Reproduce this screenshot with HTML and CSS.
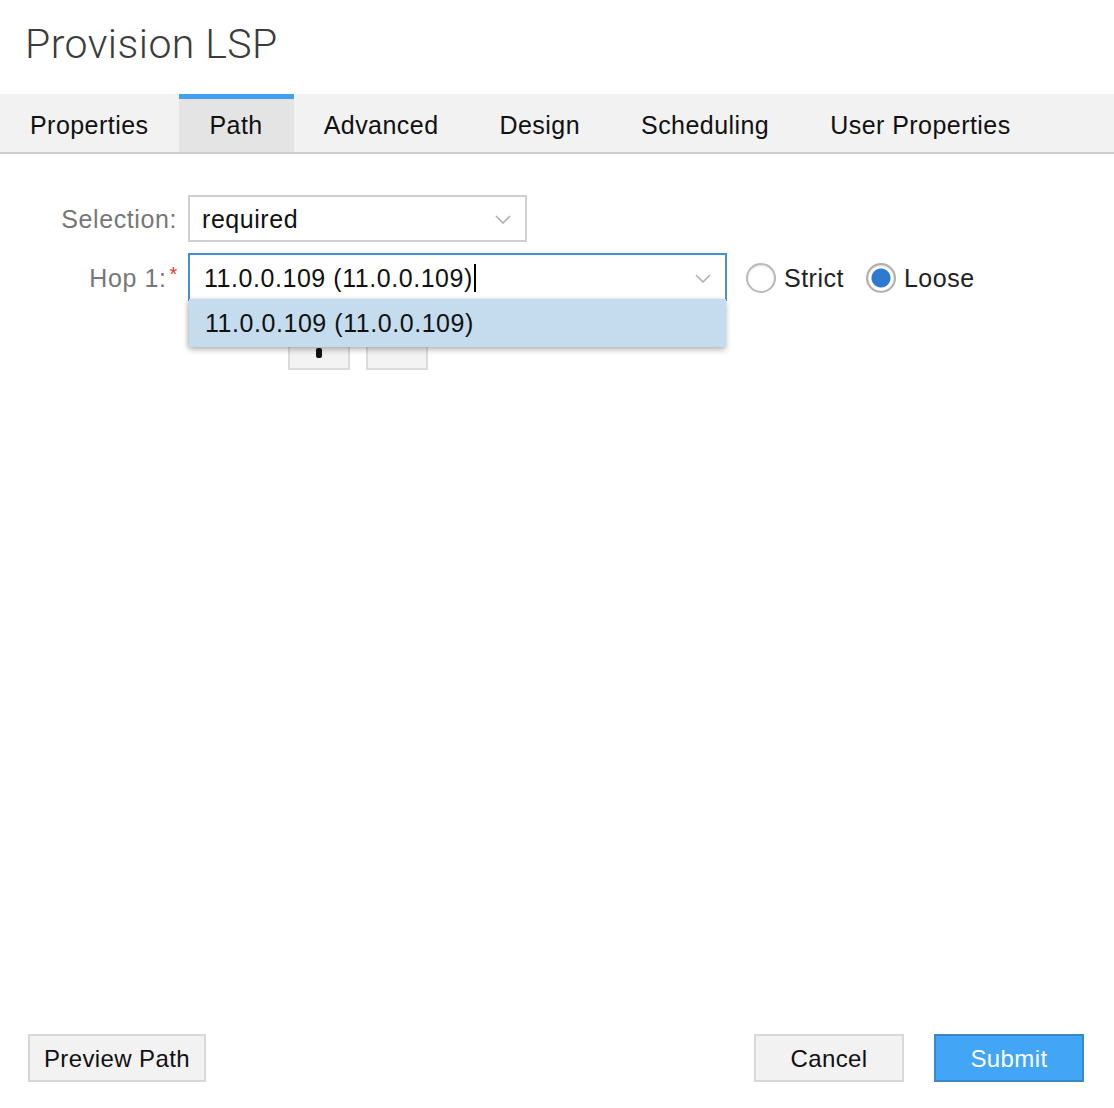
FILE: index.html
```html
<!DOCTYPE html>
<html>
<head>
<meta charset="utf-8">
<link rel="stylesheet" href="styles.css">
</head>
<body>
<div class="page">
  <h1 class="title">Provision LSP</h1>
  <nav class="tabs">
    <div class="tab">Properties</div>
    <div class="tab active">Path</div>
    <div class="tab">Advanced</div>
    <div class="tab">Design</div>
    <div class="tab">Scheduling</div>
    <div class="tab">User Properties</div>
  </nav>
  <main class="form">
    <div class="row">
      <label class="label">Selection:</label>
      <div class="select sel-small">
        <span class="value">required</span>
        <svg class="chev" width="16" height="9" viewBox="0 0 16 9"><polyline points="1,1 8,8 15,1" fill="none" stroke="#b0b0b0" stroke-width="1.6"/></svg>
      </div>
    </div>
    <div class="row">
      <label class="label">Hop 1:<span class="req">*</span></label>
      <div class="select sel-wide focused">
        <span class="value">11.0.0.109 (11.0.0.109)<span class="caret"></span></span>
        <svg class="chev" width="16" height="9" viewBox="0 0 16 9"><polyline points="1,1 8,8 15,1" fill="none" stroke="#b0b0b0" stroke-width="1.6"/></svg>
        <div class="dropdown"><div class="option">11.0.0.109 (11.0.0.109)</div></div>
      </div>
      <div class="radios">
        <label class="radio"><span class="circle"></span>Strict</label>
        <label class="radio"><span class="circle on"></span>Loose</label>
      </div>
    </div>
    <div class="mini-buttons">
      <div class="mini"><span class="dot"></span></div>
      <div class="mini"></div>
    </div>
  </main>
  <footer class="footer">
    <button class="btn first">Preview Path</button>
    <div class="spacer"></div>
    <button class="btn wide">Cancel</button>
    <button class="btn wide primary">Submit</button>
  </footer>
</div>
</body>
</html>
```

FILE: styles.css
```css
* { box-sizing: border-box; }
html, body { margin: 0; padding: 0; background: #fff; }
body { font-family: "Liberation Sans", Arial, sans-serif; color: #111; }
.page { display: flex; flex-direction: column; min-height: 1108px; }

.title {
  margin: 0;
  height: 94px;
  padding: 19px 0 0 25px;
  font-family: Roboto, "Liberation Sans", sans-serif;
  font-weight: 300;
  font-size: 41px;
  line-height: 50px;
  color: #3c3c3c;
  letter-spacing: 0.45px;
}

.tabs {
  display: flex;
  height: 60px;
  background: #f2f2f2;
  border-bottom: 2px solid #cfcfcf;
}
.tab {
  padding: 0 31px 0 30px;
  font-size: 25px;
  letter-spacing: 0.45px;
  height: 58px;
  color: #111;
  border-top: 5px solid transparent;
  line-height: 52px;
}
.tab.active {
  background: #e4e4e4;
  border-top-color: #42a0f0;
}

.form { padding-top: 41px; }
.row { display: flex; align-items: center; margin-bottom: 11px; }
.label {
  width: 188px;
  padding-right: 11px;
  text-align: right;
  font-size: 25px;
  color: #777;
  letter-spacing: 0.6px;
  position: relative;
  padding-top: 2px;
}
.req { color: #e23a2e; font-size: 20px; vertical-align: 6px; margin-left: 3px; margin-right: -1px; }

.select {
  position: relative;
  display: flex;
  align-items: center;
  justify-content: space-between;
  border: 2px solid #d0d0d0;
  background: #fff;
  font-size: 25px;
  letter-spacing: 0.55px;
  color: #111;
}
.sel-small { width: 339px; height: 47px; padding: 2px 14px 0 12px; }
.sel-wide { width: 539px; height: 48px; padding: 2px 14px 0 14px; }
.select.focused { border-color: #4a8fd0; }
.value { display: flex; align-items: center; }
.caret { display: inline-block; width: 2px; height: 28px; background: #000; margin-left: 1px; }
.chev { display: block; }

.dropdown {
  position: absolute;
  left: -1px;
  right: -1px;
  top: 100%;
  height: 48px;
  background: #c5dcee;
  box-shadow: 0 3px 6px rgba(0,0,0,0.25), -2px 0 4px rgba(0,0,0,0.12);
  z-index: 5;
}
.option {
  padding-left: 16px;
  padding-top: 1px;
  line-height: 46px;
  font-size: 25px;
  letter-spacing: 0.55px;
  color: #111;
}

.radios { display: flex; align-items: center; margin-left: 19px; padding-top: 2px; }
.radio {
  display: flex;
  align-items: center;
  font-size: 25px;
  letter-spacing: 0.5px;
  color: #222;
  margin-right: 22px;
}
.circle {
  width: 30px; height: 30px;
  border-radius: 50%;
  border: 2px solid #b8b8b8;
  background: #fff;
  box-shadow: inset 0 1px 2px rgba(0,0,0,0.12);
  margin-right: 8px;
}
.circle.on {
  background: radial-gradient(circle, #2e7ad0 0 9px, #fff 10px 12px, #e8e8e8 13px);
  border-color: #b0b0b0;
}

.mini-buttons { display: flex; gap: 16px; margin: 29px 0 0 288px; }
.mini {
  width: 62px; height: 40px;
  background: #f3f3f3;
  border: 2px solid #dcdcdc;
  position: relative;
}
.dot {
  position: absolute;
  left: 26px; top: 16px;
  width: 6px; height: 10px;
  border-radius: 2px;
  background: #111;
}

.footer {
  margin-top: auto;
  display: flex;
  align-items: center;
  padding: 0 30px 26px 28px;
}
.spacer { flex: 1; }
.btn {
  height: 48px;
  padding: 2px 0 0;
  background: #f2f2f2;
  border: 2px solid #d8d8d8;
  font-family: "Liberation Sans", Arial, sans-serif;
  font-size: 24px;
  letter-spacing: 0.4px;
  color: #111;
  border-radius: 0;
  white-space: nowrap;
}
.btn.first { width: 178px; }
.btn.wide { width: 150px; margin-left: 30px; }
.btn.primary { background: #42a5f5; border-color: #3a88c8; color: #fff; }
```
